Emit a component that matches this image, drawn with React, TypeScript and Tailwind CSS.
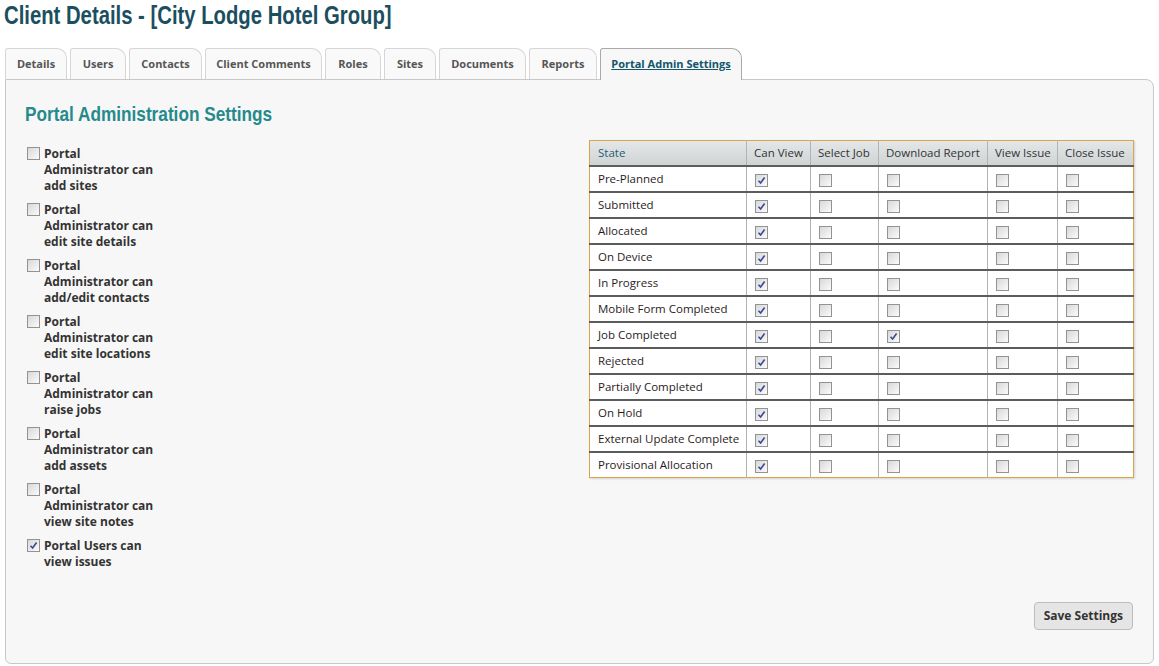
import React from 'react';

const tabs = [
    { label: 'Details', w: 'w-[62px]' },
    { label: 'Users', w: 'w-[56px]' },
    { label: 'Contacts', w: 'w-[73px]' },
    { label: 'Client Comments', w: 'w-[117px]' },
    { label: 'Roles', w: 'w-[56px]' },
    { label: 'Sites', w: 'w-[52px]' },
    { label: 'Documents', w: 'w-[87px]' },
    { label: 'Reports', w: 'w-[68px]' },
    { label: 'Portal Admin Settings', w: 'w-[142px]' }
];

const options = [
    { label: 'Portal Administrator can add sites', on: false },
    { label: 'Portal Administrator can edit site details', on: false },
    { label: 'Portal Administrator can add/edit contacts', on: false },
    { label: 'Portal Administrator can edit site locations', on: false },
    { label: 'Portal Administrator can raise jobs', on: false },
    { label: 'Portal Administrator can add assets', on: false },
    { label: 'Portal Administrator can view site notes', on: false },
    { label: 'Portal Users can view issues', on: true }
];

const states = [
    'Pre-Planned',
    'Submitted',
    'Allocated',
    'On Device',
    'In Progress',
    'Mobile Form Completed',
    'Job Completed',
    'Rejected',
    'Partially Completed',
    'On Hold',
    'External Update Complete',
    'Provisional Allocation'
];

const font = { fontFamily: '"Open Sans", "Noto Sans", sans-serif' };
const narrow = { fontFamily: '"Liberation Sans", Arial, sans-serif' };

function Box({ on }: { on?: boolean }) {
    return (
        <span className="inline-flex h-[13px] w-[13px] shrink-0 items-center justify-center border border-[#939393] bg-linear-to-br from-[#d8d8d8] to-[#fbfbfb]">
            {on && (
                <svg width="9" height="9" viewBox="0 0 9 9">
                    <path d="M1.5 4.8 L3.6 7 L7.6 1.5" fill="none" stroke="#3b4a92" strokeWidth="1.6" />
                </svg>
            )}
        </span>
    );
}

function Cell({ on, edge }: { on?: boolean; edge?: boolean }) {
    return (
        <td className={`h-[24px] p-0 pl-[8px] align-middle ${edge ? '' : 'border-r border-r-[#b3b3b3]'}`}>
            <div className="flex h-[24px] items-center pt-[3px]">
                <Box on={on} />
            </div>
        </td>
    );
}

export default function App() {
    return (
        <div className="min-h-[666px] w-[1159px] bg-white text-[#333]" style={font}>
            <div className="h-[30px] pl-[4px]">
                <h1 className="inline-block origin-left scale-x-[0.78] text-[26px] leading-[30px] font-bold text-[#1b4f60]" style={narrow}>
                    Client Details - [City Lodge Hotel Group]
                </h1>
            </div>

            <div className="mt-[18px] flex gap-[3px] pl-[5px]">
                {tabs.map((t, i) =>
                    i === tabs.length - 1 ? (
                        <div
                            key={t.label}
                            className={`relative z-10 -mb-px flex h-[32px] items-center justify-center rounded-tl-[3px] rounded-tr-[10px] border border-b-0 border-[#a9a9a9] bg-[#f7f7f7] text-[11px] font-bold whitespace-nowrap text-[#11566b] underline ${t.w}`}
                        >
                            {t.label}
                        </div>
                    ) : (
                        <div
                            key={t.label}
                            className={`flex h-[31px] items-center justify-center rounded-tl-[3px] rounded-tr-[10px] border border-b-0 border-[#d6d6d6] bg-[#f9f9f9] text-[11px] font-bold whitespace-nowrap text-[#555] ${t.w}`}
                        >
                            {t.label}
                        </div>
                    )
                )}
            </div>

            <div className="mx-[5px] flex h-[585px] flex-col rounded-tr-[8px] rounded-b-[6px] border border-[#c8c8c8] bg-[#f7f7f7] pr-[19px] pl-[19px]">
                <div className="mt-[21px] h-[26px]">
                    <h2 className="inline-block origin-left scale-x-[0.82] text-[21px] leading-[26px] font-bold text-[#258a8c]" style={narrow}>
                        Portal Administration Settings
                    </h2>
                </div>

                <div className="mt-[13px] flex items-start justify-between">
                    <div className="flex w-[140px] flex-col gap-[8px] pt-[6px] pl-[2px]">
                        {options.map((o) => (
                            <div key={o.label} className="flex items-start gap-[4px]">
                                <span className="mt-[1px] flex">
                                    <Box on={o.on} />
                                </span>
                                <span className="w-[118px] text-[12px] leading-[16px] font-bold text-[#333]">{o.label}</span>
                            </div>
                        ))}
                    </div>

                    <table className="w-[545px] border-collapse border border-[#dca44a] text-[11.5px] leading-[16px] shadow-[1px_1px_2px_rgba(0,0,0,0.15)]">
                        <thead>
                            <tr className="bg-linear-to-b from-[#e4e7e7] to-[#cfd3d3] text-left">
                                <th className="h-[25px] w-[157px] border-r border-b-2 border-r-[#b3b3b3] border-b-[#5c5c5c] p-0 pl-[8px] font-normal text-[#1e5d78]">State</th>
                                <th className="w-[64px] border-r border-b-2 border-r-[#b3b3b3] border-b-[#5c5c5c] p-0 pl-[7px] font-normal text-[#333]">Can View</th>
                                <th className="w-[68px] border-r border-b-2 border-r-[#b3b3b3] border-b-[#5c5c5c] p-0 pl-[7px] font-normal text-[#333]">Select Job</th>
                                <th className="w-[109px] border-r border-b-2 border-r-[#b3b3b3] border-b-[#5c5c5c] p-0 pl-[7px] font-normal text-[#333]">Download Report</th>
                                <th className="w-[70px] border-r border-b-2 border-r-[#b3b3b3] border-b-[#5c5c5c] p-0 pl-[7px] font-normal text-[#333]">View Issue</th>
                                <th className="border-b-2 border-b-[#5c5c5c] p-0 pl-[7px] font-normal text-[#333]">Close Issue</th>
                            </tr>
                        </thead>
                        <tbody>
                            {states.map((s, i) => {
                                const last = i === states.length - 1;
                                return (
                                    <tr key={s} className={`bg-white ${last ? '' : 'border-b-2 border-b-[#5c5c5c]'}`}>
                                        <td className="h-[24px] border-r border-r-[#b3b3b3] p-0 pl-[8px] text-[#2a1c1c]">{s}</td>
                                        <Cell on />
                                        <Cell />
                                        <Cell on={s === 'Job Completed'} />
                                        <Cell />
                                        <Cell edge />
                                    </tr>
                                );
                            })}
                        </tbody>
                    </table>
                </div>

                <div className="mt-auto mb-[33px] flex justify-end">
                    <button className="mr-[1px] h-[28px] rounded-[4px] border border-[#bdbdbd] bg-[#e5e5e5] px-[9px] text-[12px] font-bold text-[#333]">
                        Save Settings
                    </button>
                </div>
            </div>
        </div>
    );
}
